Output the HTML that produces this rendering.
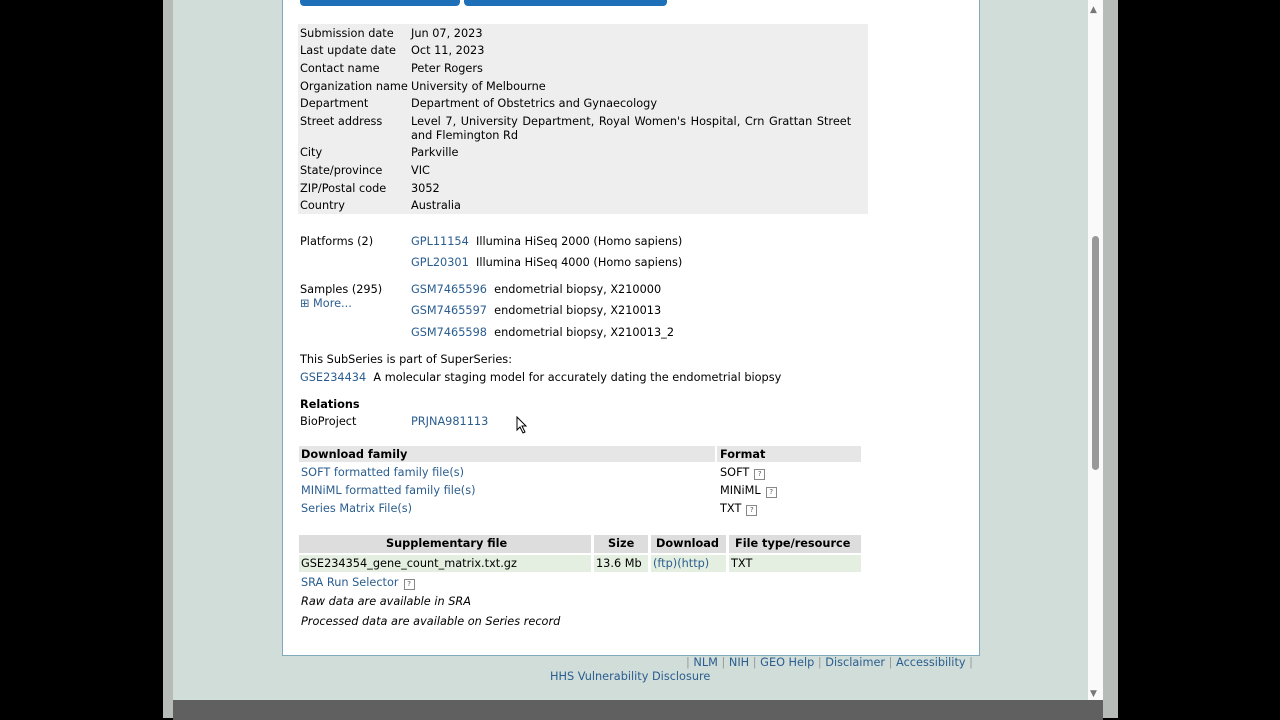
<!DOCTYPE html>
<html><head><meta charset="utf-8"><style>
body{margin:0;width:1280px;height:720px;background:#000;position:relative;overflow:hidden;font-family:"DejaVu Sans","Liberation Sans",sans-serif;font-size:11.3px;color:#000}
.a{position:absolute;white-space:nowrap;line-height:14px;margin-top:1px}
a,.l{color:#2a5d8f;text-decoration:none}
.q{display:inline-block;width:9px;height:9px;border:1px solid #888;font-size:7px;line-height:9px;text-align:center;color:#555;margin-left:5px;vertical-align:0}
b{font-weight:bold}
</style></head><body>
<div style="position:absolute;left:163px;top:0;width:955px;height:718px;background:#b8bcb8"></div>
<div style="position:absolute;left:173px;top:0;width:915px;height:700px;background:#d1ddd9"></div>
<div style="position:absolute;left:1088px;top:0;width:15px;height:700px;background:#fafafa"></div>
<div style="position:absolute;left:1092px;top:236px;width:7px;height:234px;background:#999;border-radius:4px"></div>
<div class="a" style="left:1090px;top:2px;font-size:9px;color:#777">▲</div>
<div class="a" style="left:1090px;top:686px;font-size:9px;color:#777">▼</div>
<div style="position:absolute;left:173px;top:700px;width:930px;height:20px;background:#606060"></div>
<div style="position:absolute;left:282px;top:-1px;width:696px;height:655px;background:#fff;border:1px solid #7fa9bd"></div>
<div style="position:absolute;left:300px;top:0;width:160px;height:6px;background:#1d70b8;border-radius:0 0 4px 4px"></div>
<div style="position:absolute;left:464px;top:0;width:203px;height:6px;background:#1d70b8;border-radius:0 0 4px 4px"></div>
<div style="position:absolute;left:298px;top:24px;width:570px;height:190px;background:#eee"></div>

<div class="a" style="left:300px;top:26px">Submission date</div><div class="a" style="left:411px;top:26px">Jun 07, 2023</div>
<div class="a" style="left:300px;top:43px">Last update date</div><div class="a" style="left:411px;top:43px">Oct 11, 2023</div>
<div class="a" style="left:300px;top:61px">Contact name</div><div class="a" style="left:411px;top:61px">Peter Rogers</div>
<div class="a" style="left:300px;top:79px">Organization name</div><div class="a" style="left:411px;top:79px">University of Melbourne</div>
<div class="a" style="left:300px;top:96px">Department</div><div class="a" style="left:411px;top:96px">Department of Obstetrics and Gynaecology</div>
<div class="a" style="left:300px;top:114px">Street address</div><div class="a" style="left:411px;top:114px;word-spacing:1px">Level 7, University Department, Royal Women's Hospital, Crn Grattan Street</div>
<div class="a" style="left:411px;top:128px">and Flemington Rd</div>
<div class="a" style="left:300px;top:145px">City</div><div class="a" style="left:411px;top:145px">Parkville</div>
<div class="a" style="left:300px;top:163px">State/province</div><div class="a" style="left:411px;top:163px">VIC</div>
<div class="a" style="left:300px;top:181px">ZIP/Postal code</div><div class="a" style="left:411px;top:181px">3052</div>
<div class="a" style="left:300px;top:198px">Country</div><div class="a" style="left:411px;top:198px">Australia</div>

<div class="a" style="left:300px;top:234px">Platforms (2)</div>
<div class="a" style="left:411px;top:234px"><a>GPL11154</a>&nbsp; Illumina HiSeq 2000 (Homo sapiens)</div>
<div class="a" style="left:411px;top:255px"><a>GPL20301</a>&nbsp; Illumina HiSeq 4000 (Homo sapiens)</div>
<div class="a" style="left:300px;top:282px">Samples (295)</div>
<div class="a l" style="left:300px;top:296px">⊞ More...</div>
<div class="a" style="left:411px;top:282px"><a>GSM7465596</a>&nbsp; endometrial biopsy, X210000</div>
<div class="a" style="left:411px;top:303px"><a>GSM7465597</a>&nbsp; endometrial biopsy, X210013</div>
<div class="a" style="left:411px;top:325px"><a>GSM7465598</a>&nbsp; endometrial biopsy, X210013_2</div>
<div class="a" style="left:300px;top:352px">This SubSeries is part of SuperSeries:</div>
<div class="a" style="left:300px;top:370px"><a>GSE234434</a>&nbsp; A molecular staging model for accurately dating the endometrial biopsy</div>
<div class="a" style="left:300px;top:397px"><b>Relations</b></div>
<div class="a" style="left:300px;top:414px">BioProject</div>
<div class="a" style="left:411px;top:414px"><a>PRJNA981113</a></div>
<svg style="position:absolute;left:516px;top:416px" width="12" height="18"><path d="M1 1 L1 14 L4 11 L7 17 L9 16 L6 10 L10 10 Z" fill="#fff" stroke="#000" stroke-width="1"/></svg>

<div style="position:absolute;left:299px;top:446px;width:416px;height:16px;background:#e6e6e6"></div>
<div style="position:absolute;left:717px;top:446px;width:144px;height:16px;background:#e6e6e6"></div>
<div class="a" style="left:301px;top:447px"><b>Download family</b></div>
<div class="a" style="left:720px;top:447px"><b>Format</b></div>
<div class="a l" style="left:301px;top:465px">SOFT formatted family file(s)</div><div class="a" style="left:720px;top:465px">SOFT<span class="q">?</span></div>
<div class="a l" style="left:301px;top:483px">MINiML formatted family file(s)</div><div class="a" style="left:720px;top:483px">MINiML<span class="q">?</span></div>
<div class="a l" style="left:301px;top:501px">Series Matrix File(s)</div><div class="a" style="left:720px;top:501px">TXT<span class="q">?</span></div>

<div style="position:absolute;left:299px;top:535px;width:292px;height:18px;background:#ddd"></div>
<div style="position:absolute;left:594px;top:535px;width:54px;height:18px;background:#ddd"></div>
<div style="position:absolute;left:651px;top:535px;width:75px;height:18px;background:#ddd"></div>
<div style="position:absolute;left:729px;top:535px;width:132px;height:18px;background:#ddd"></div>
<div style="position:absolute;left:299px;top:555px;width:292px;height:17px;background:#e4efe1"></div>
<div style="position:absolute;left:594px;top:555px;width:54px;height:17px;background:#e4efe1"></div>
<div style="position:absolute;left:651px;top:555px;width:75px;height:17px;background:#e4efe1"></div>
<div style="position:absolute;left:729px;top:555px;width:132px;height:17px;background:#e4efe1"></div>
<div class="a" style="left:386px;top:536px"><b>Supplementary file</b></div>
<div class="a" style="left:608px;top:536px"><b>Size</b></div>
<div class="a" style="left:656px;top:536px"><b>Download</b></div>
<div class="a" style="left:735px;top:536px"><b>File type/resource</b></div>
<div class="a" style="left:301px;top:556px">GSE234354_gene_count_matrix.txt.gz</div>
<div class="a" style="left:596px;top:556px">13.6 Mb</div>
<div class="a l" style="left:653px;top:556px">(ftp)(http)</div>
<div class="a" style="left:731px;top:556px">TXT</div>
<div class="a l" style="left:301px;top:575px">SRA Run Selector<span class="q">?</span></div>
<div class="a" style="left:301px;top:594px;font-style:italic">Raw data are available in SRA</div>
<div class="a" style="left:301px;top:614px;font-style:italic">Processed data are available on Series record</div>

<div class="a" style="left:686px;top:655px;color:#2a5d8f"><span style="color:#999">|</span> NLM <span style="color:#999">|</span> NIH <span style="color:#999">|</span> GEO Help <span style="color:#999">|</span> Disclaimer <span style="color:#999">|</span> Accessibility <span style="color:#999">|</span></div>
<div class="a l" style="left:550px;top:669px">HHS Vulnerability Disclosure</div>
</body></html>
